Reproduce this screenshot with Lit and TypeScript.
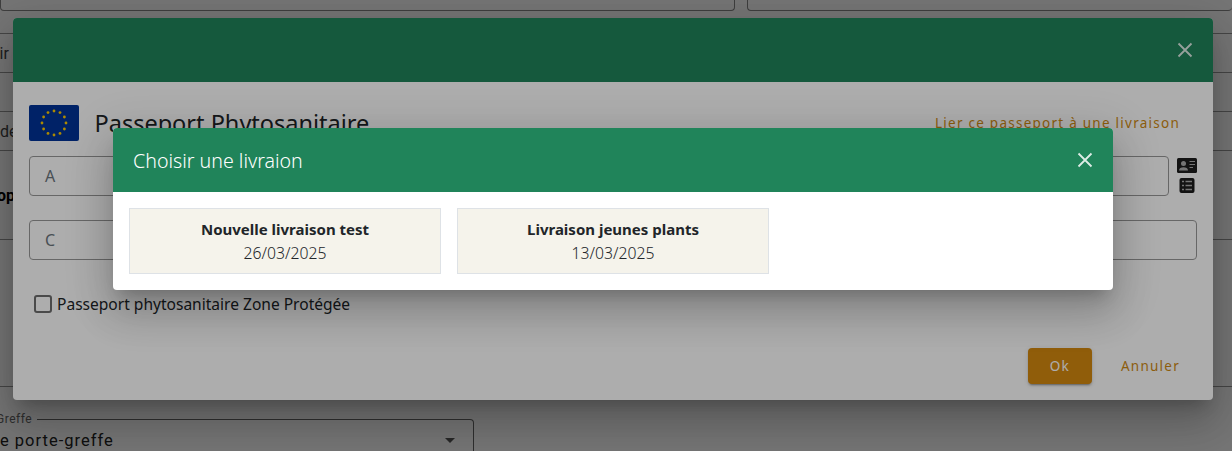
import { css, html, LitElement, svg } from 'lit';
import { customElement } from 'lit/decorators.js';

const livraisons = [
  { name: 'Nouvelle livraison test', date: '26/03/2025' },
  { name: 'Livraison jeunes plants', date: '13/03/2025' },
];

// 12 stars on a ring for the EU flag
const stars = Array.from({ length: 12 }, (_, i) => {
  const a = (i * Math.PI) / 6;
  return { x: 25 + 12 * Math.sin(a), y: 18 - 12 * Math.cos(a) };
});

const closeIcon = html`<svg class="close" width="16" height="16" viewBox="0 0 16 16">
  <path d="M1.5 1.5 14.5 14.5M14.5 1.5 1.5 14.5" fill="none" stroke="currentColor" stroke-width="1.8" />
</svg>`;

@customElement('app-root')
export class AppRoot extends LitElement {
  static override styles = css`
    :host {
      display: block;
      position: relative;
      width: 1232px;
      height: 451px;
      overflow: hidden;
      background: #fff;
      font-family: 'Noto Sans', sans-serif;
      color: #212529;
    }

    /* page behind the dialogs */
    .page {
      display: flex;
      flex-direction: column;
      height: 451px;
      font-family: Roboto, sans-serif;
    }
    .top-fields {
      display: grid;
      grid-template-columns: 735px 1fr;
      gap: 12px;
      height: 11px;
      flex: none;
    }
    .top-fields div {
      border: 1px solid #888;
      border-top: 0;
      border-radius: 0 0 4px 4px;
    }
    .top-fields div:last-child {
      border-right: 0;
    }
    .band {
      flex: none;
      display: flex;
      align-items: center;
      height: 38px;
      border-top: 1px solid #999;
      border-bottom: 1px solid #999;
      font-size: 16px;
      color: #444;
      white-space: nowrap;
    }
    .band.first {
      margin-top: 22px;
    }
    .band.first span {
      margin-left: -41px;
    }
    .band.second {
      margin-top: 38px;
    }
    .bold {
      flex: none;
      margin: 34px 0 0 -3px;
      height: 22px;
      font-size: 16px;
      line-height: 22px;
      font-weight: 700;
      color: #000;
    }
    .rule {
      flex: none;
      border-top: 1px solid #999;
    }
    .rule.a {
      margin-top: 32px;
    }
    .rule.b {
      margin-top: 146px;
    }
    .select {
      flex: none;
      display: flex;
      align-items: center;
      justify-content: space-between;
      position: relative;
      box-sizing: border-box;
      width: 475px;
      height: 44px;
      margin: 32px 0 0 -1px;
      padding: 0 18px 2px 0;
      border: 1px solid #666;
      border-left: 0;
      border-radius: 0 4px 0 0;
      font-size: 16.5px;
      letter-spacing: 1px;
      color: #222;
    }
    .select label {
      position: absolute;
      top: -8px;
      left: -3px;
      padding: 0 5px 0 0;
      background: #fff;
      font-size: 12px;
      line-height: 14px;
      letter-spacing: 0.5px;
      color: #666;
    }
    .select .value {
      margin-left: 1px;
    }
    .caret {
      width: 0;
      height: 0;
      border-left: 5px solid transparent;
      border-right: 5px solid transparent;
      border-top: 5px solid #555;
    }

    /* modal layers */
    .overlay {
      position: absolute;
      inset: 0;
      display: flex;
      justify-content: center;
      align-items: flex-start;
      padding-right: 6px;
      background: rgba(0, 0, 0, 0.32);
    }
    .overlay.one {
      padding-top: 18px;
    }
    .overlay.two {
      padding-top: 128px;
    }
    .dialog {
      display: flex;
      flex-direction: column;
      background: #fff;
      border-radius: 4px;
      overflow: hidden;
      box-shadow:
        0 11px 15px -7px rgba(0, 0, 0, 0.2),
        0 24px 38px 3px rgba(0, 0, 0, 0.14),
        0 9px 46px 8px rgba(0, 0, 0, 0.12);
    }
    .one .dialog {
      width: 1200px;
      height: 382px;
    }
    .two .dialog {
      width: 1000px;
      height: 162px;
    }
    .head {
      flex: none;
      display: flex;
      align-items: center;
      justify-content: space-between;
      box-sizing: border-box;
      height: 64px;
      padding: 0 20.5px 0 20px;
      background: #20845a;
      color: #fff;
      font-size: 19.6px;
      font-weight: 300;
    }
    .close {
      display: block;
      opacity: 0.85;
    }

    .passport {
      flex: 1;
      display: flex;
      flex-direction: column;
      padding: 23px 16px 16px;
    }
    .title-row {
      display: flex;
      align-items: flex-start;
      height: 36px;
    }
    .flag {
      display: block;
      border-radius: 2px;
    }
    .title-row h2 {
      margin: 0 0 0 15.5px;
      font-size: 23.5px;
      line-height: 36px;
      font-weight: 400;
      color: #212529;
    }
    .link,
    .cancel {
      font-size: 13.5px;
      letter-spacing: 1.25px;
      color: #cf8a13;
    }
    .link {
      margin: 8px 17px 0 auto;
      line-height: 20px;
    }
    .field {
      box-sizing: border-box;
      display: flex;
      align-items: center;
      height: 40px;
      padding: 0 15px;
      border: 1px solid #999;
      border-radius: 4px;
      font-size: 16px;
      color: #6c757d;
    }
    .field-row {
      display: flex;
      gap: 8px;
      margin-top: 15px;
    }
    .field-row .field {
      flex: 1;
    }
    .side-icons {
      width: 20px;
      display: flex;
      flex-direction: column;
      align-items: center;
      gap: 5px;
      padding-top: 2px;
    }
    .side-icons svg {
      display: block;
    }
    .field.wide {
      margin-top: 24px;
    }
    .check {
      display: flex;
      align-items: center;
      gap: 5px;
      margin: 35px 0 0 5px;
      font-size: 15.55px;
      line-height: 16px;
      color: #212529;
    }
    .box {
      box-sizing: border-box;
      width: 18px;
      height: 18px;
      border: 2px solid #6d6d6d;
      border-radius: 3px;
    }
    .actions {
      display: flex;
      align-items: center;
      justify-content: flex-end;
      margin-top: auto;
      padding-right: 17px;
    }
    .ok {
      box-sizing: border-box;
      width: 64px;
      height: 36px;
      display: flex;
      align-items: center;
      justify-content: center;
      border-radius: 4px;
      background: #d58a10;
      color: #fff;
      font-size: 13.5px;
      letter-spacing: 1.25px;
      box-shadow:
        0 3px 1px -2px rgba(0, 0, 0, 0.2),
        0 2px 2px rgba(0, 0, 0, 0.14),
        0 1px 5px rgba(0, 0, 0, 0.12);
    }
    .cancel {
      margin-left: 29px;
    }

    .choices {
      display: flex;
      gap: 16px;
      padding: 16px;
    }
    .card {
      box-sizing: border-box;
      width: 312px;
      height: 66px;
      display: flex;
      flex-direction: column;
      align-items: center;
      justify-content: center;
      background: #f5f3eb;
      border: 1px solid #dee2e6;
      font-size: 15px;
      line-height: 24px;
      color: #212529;
    }
    .card strong {
      font-weight: 700;
    }
    .card span {
      font-size: 15.75px;
      font-weight: 300;
    }
  `;

  override render() {
    return html`
      <div class="page">
        <div class="top-fields"><div></div><div></div></div>
        <div class="band first"><span>Choisir</span></div>
        <div class="band second"><span>de</span></div>
        <div class="bold">op</div>
        <div class="rule a"></div>
        <div class="rule b"></div>
        <div class="select">
          <label>Greffe</label>
          <span class="value">e porte-greffe</span>
          <span class="caret"></span>
        </div>
      </div>

      <div class="overlay one">
        <div class="dialog">
          <div class="head"><span></span>${closeIcon}</div>
          <div class="passport">
            <div class="title-row">
              <svg class="flag" width="50" height="36" viewBox="0 0 50 36">
                <rect width="50" height="36" fill="#003399" />
                ${stars.map((s) => svg`<circle cx=${s.x} cy=${s.y} r="1.4" fill="#ffcc00" />`)}
              </svg>
              <h2>Passeport Phytosanitaire</h2>
              <span class="link">Lier ce passeport à une livraison</span>
            </div>
            <div class="field-row">
              <div class="field">A</div>
              <div class="side-icons">
                <svg width="20" height="15" viewBox="0 0 20 15">
                  <rect width="20" height="15" rx="1.5" fill="#1c1c1c" />
                  <circle cx="6.5" cy="5.5" r="2.5" fill="#adadad" />
                  <path d="M2 12.5c0-2.2 2-3.3 4.5-3.3s4.5 1.1 4.5 3.3z" fill="#adadad" />
                  <path d="M12.5 3.5h5.5M12.5 6.5h5.5M12.5 9.5h3.5" stroke="#adadad" stroke-width="1.2" />
                </svg>
                <svg width="16" height="15" viewBox="0 0 16 15">
                  <rect x="0.5" width="15" height="15" rx="2" fill="#1c1c1c" />
                  <path d="M3 3.5h2M3 7.5h2M3 11.5h2M6.5 3.5h6.5M6.5 7.5h6.5M6.5 11.5h6.5" stroke="#adadad" stroke-width="1.7" />
                </svg>
              </div>
            </div>
            <div class="field wide">C</div>
            <div class="check"><span class="box"></span>Passeport phytosanitaire Zone Protégée</div>
            <div class="actions">
              <span class="ok">Ok</span>
              <span class="cancel">Annuler</span>
            </div>
          </div>
        </div>
      </div>

      <div class="overlay two">
        <div class="dialog">
          <div class="head"><span>Choisir une livraion</span>${closeIcon}</div>
          <div class="choices">
            ${livraisons.map(
              (l) => html`<div class="card"><strong>${l.name}</strong><span>${l.date}</span></div>`,
            )}
          </div>
        </div>
      </div>
    `;
  }
}

declare global {
  interface HTMLElementTagNameMap {
    'app-root': AppRoot;
  }
}
